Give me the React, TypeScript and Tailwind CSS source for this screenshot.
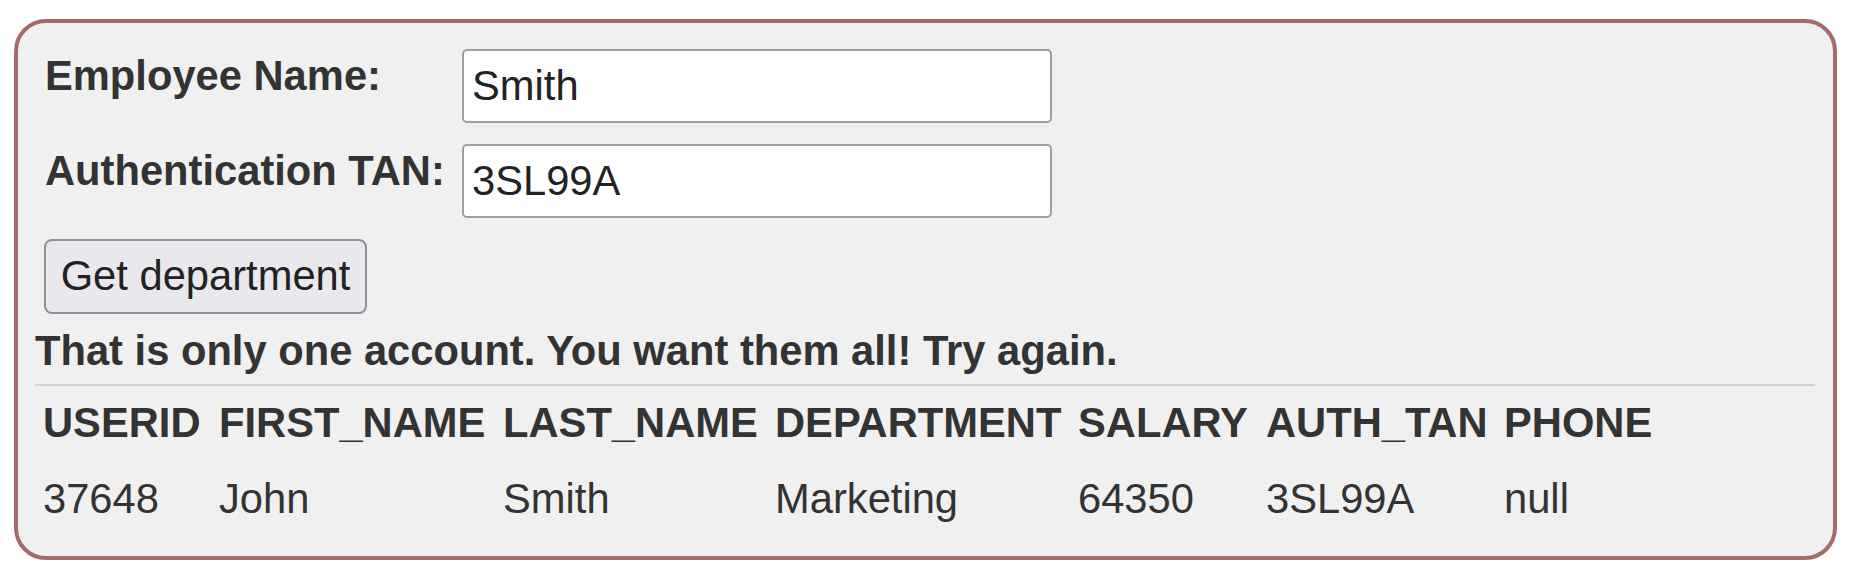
import { useState } from 'react'

const columns = [
  { key: 'USERID', width: 'w-[176px]' },
  { key: 'FIRST_NAME', width: 'w-[284px]' },
  { key: 'LAST_NAME', width: 'w-[272px]' },
  { key: 'DEPARTMENT', width: 'w-[303px]' },
  { key: 'SALARY', width: 'w-[188px]' },
  { key: 'AUTH_TAN', width: 'w-[238px]' },
  { key: 'PHONE', width: 'w-[200px]' },
]

const rows = [
  { USERID: '37648', FIRST_NAME: 'John', LAST_NAME: 'Smith', DEPARTMENT: 'Marketing', SALARY: '64350', AUTH_TAN: '3SL99A', PHONE: 'null' },
]

function App() {
  const [name, setName] = useState('Smith')
  const [tan, setTan] = useState('3SL99A')

  return (
    <div className="w-[1852px] h-[575px] bg-white pt-[19px] pl-[14px] text-[#333] font-['Liberation_Sans',Arial,sans-serif]">
      <div className="w-[1823px] h-[541px] border-4 border-[#a66a6a] rounded-[32px] bg-[#f0f0f0] flex flex-col pt-[26px]">
        <form onSubmit={e => e.preventDefault()} className="flex flex-col">
          <div className="flex items-start pl-[27px]">
            <label htmlFor="name" className="w-[417px] mt-[3px] text-[41.7px] leading-[47px] font-bold">Employee Name:</label>
            <input
              id="name"
              value={name}
              onChange={e => setName(e.target.value)}
              className="w-[590px] h-[74px] bg-white border-2 border-[#9d9dab] rounded-[5px] px-[8px] text-[41.7px] text-[#222] outline-none"
            />
          </div>
          <div className="flex items-start pl-[27px] mt-[21px]">
            <label htmlFor="tan" className="w-[417px] mt-[3px] text-[41.7px] leading-[47px] font-bold">Authentication TAN:</label>
            <input
              id="tan"
              value={tan}
              onChange={e => setTan(e.target.value)}
              className="w-[590px] h-[74px] bg-white border-2 border-[#9d9dab] rounded-[5px] px-[8px] text-[41.7px] text-[#222] outline-none"
            />
          </div>
          <div className="pl-[26px] mt-[21px]">
            <button
              type="submit"
              className="w-[323px] h-[75px] bg-[#e9e9ed] border-2 border-[#8f8f9d] rounded-[8px] text-[41.7px] text-[#222] flex items-center justify-center"
            >
              Get department
            </button>
          </div>
        </form>

        <p className="pl-[17px] mt-[13px] text-[41.7px] leading-[47px] font-bold">
          That is only one account. You want them all! Try again.
        </p>
        <div className="ml-[17px] mt-[10px] w-[1780px] h-[2px] bg-[#d3d3d3]" />

        <div className="pl-[25px] mt-[13px] text-[41.7px] leading-[47px]">
          <div className="flex font-bold">
            {columns.map(c => (
              <div key={c.key} className={c.width}>{c.key}</div>
            ))}
          </div>
          {rows.map(r => (
            <div key={r.USERID} className="flex mt-[29px]">
              {columns.map(c => (
                <div key={c.key} className={c.width}>{r[c.key as keyof typeof r]}</div>
              ))}
            </div>
          ))}
        </div>
      </div>
    </div>
  )
}

export default App
